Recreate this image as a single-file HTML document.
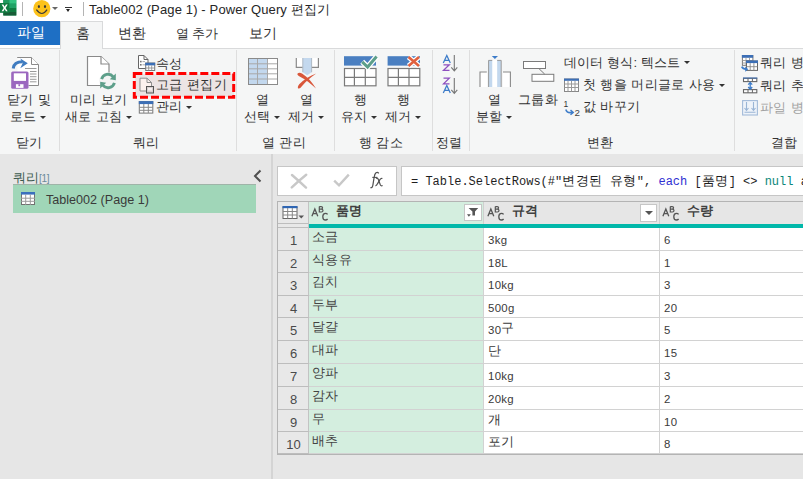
<!DOCTYPE html>
<html><head><meta charset="utf-8">
<style>
*{box-sizing:border-box;margin:0;padding:0}
html,body{width:803px;height:479px;overflow:hidden;background:#fff}
body{position:relative;font-family:"Liberation Sans",sans-serif;color:#333}
.a{position:absolute;white-space:nowrap;line-height:1}
.k13{font-size:13px;letter-spacing:0.4px}
.k14{font-size:13.5px}
.kf{font-size:12.8px;letter-spacing:0.48px}
#ribbon{position:absolute;left:0;top:47.5px;width:803px;height:106.5px;background:#f5f6f6;border-top:1px solid #d9dadb}
.sep{position:absolute;top:1.5px;width:1px;height:101px;background:#dedede}
#lower{position:absolute;left:0;top:154px;width:803px;height:325px;background:#e6e6e6}
.dd{display:inline-block;width:0;height:0;border-left:3px solid transparent;border-right:3px solid transparent;border-top:3px solid #333;vertical-align:middle;margin-left:3.6px;position:relative;top:-0.5px}
</style></head><body>

<!-- title bar -->
<svg class="a" style="left:0;top:0" width="17" height="16" viewBox="0 0 17 16">
  <rect x="3.3" y="0" width="13" height="15.5" fill="#21a366"/>
  <rect x="9.3" y="0" width="7" height="3.6" fill="#33c481"/>
  <rect x="9.3" y="3.6" width="7" height="4.4" fill="#21a366"/>
  <rect x="9.3" y="8" width="7" height="4" fill="#107c41"/>
  <rect x="3.3" y="12" width="13" height="3.5" fill="#185c37"/>
  <rect x="3.3" y="0" width="6" height="3" fill="#1f9a5e"/>
  <rect x="0" y="3" width="9.3" height="9.8" fill="#107c41"/>
  <path d="M1.6 4.6 L3.4 4.6 L4.65 6.7 L5.9 4.6 L7.7 4.6 L5.6 7.9 L7.7 11.2 L5.9 11.2 L4.65 9.1 L3.4 11.2 L1.6 11.2 L3.7 7.9Z" fill="#fff"/>
</svg>
<div class="a" style="left:21.5px;top:2px;width:1px;height:13.5px;background:#b4b4b4"></div>
<svg class="a" style="left:33px;top:0" width="18" height="18" viewBox="0 0 18 18">
  <circle cx="8.8" cy="8.7" r="8.6" fill="#fcc21b"/>
  <ellipse cx="5.9" cy="6.4" rx="1.05" ry="1.5" fill="#3a3a3a"/>
  <ellipse cx="12" cy="6.4" rx="1.05" ry="1.5" fill="#3a3a3a"/>
  <path d="M3.4 9.7 Q8.9 17.3 14.1 9.7" stroke="#3a3a3a" stroke-width="1.2" fill="none"/>
</svg>
<div class="a" style="left:52px;top:7px;width:0;height:0;border-left:3.5px solid transparent;border-right:3.5px solid transparent;border-top:3.5px solid #666"></div>
<div class="a" style="left:65px;top:7px;width:6.5px;height:1px;background:#333"></div>
<div class="a" style="left:65.8px;top:9.2px;width:0;height:0;border-left:2.6px solid transparent;border-right:2.6px solid transparent;border-top:3px solid #222"></div>
<div class="a" style="left:83px;top:2px;width:1px;height:13.5px;background:#b4b4b4"></div>
<div class="a k13" style="left:89px;top:3px;color:#262626;letter-spacing:0.14px">Table002 (Page 1) - Power Query 편집기</div>

<!-- tabs -->
<div class="a" style="left:0;top:21px;width:60px;height:24px;background:#1e6fc4"></div>
<div class="a k14" style="left:16.5px;top:25.5px;color:#fff">파일</div>
<div class="a" style="left:60px;top:21px;width:43px;height:28px;background:#f5f6f6;border:1px solid #d9dadb;border-bottom:none;z-index:2"></div>
<div class="a k14" style="left:75.5px;top:26.5px;z-index:3">홈</div>
<div class="a k14" style="left:118px;top:26.5px">변환</div>
<div class="a k14" style="left:175.5px;top:27px;font-size:13.2px">열 추가</div>
<div class="a k14" style="left:249px;top:26.5px">보기</div>

<div id="ribbon">
  <div class="sep" style="left:59px"></div>
  <div class="sep" style="left:236px"></div>
  <div class="sep" style="left:334px"></div>
  <div class="sep" style="left:432px"></div>
  <div class="sep" style="left:469px"></div>
  <div class="sep" style="left:734px"></div>
</div>



<!-- ribbon icons -->
<!-- close & load -->
<svg class="a" style="left:8px;top:52px" width="36" height="40" viewBox="8 52 36 40">
 <path d="M17.5 57.5H31.5L38.5 64.5V85.5H17.5Z" fill="#fff"/>
 <path d="M17.2 57.5H31.5L38.5 64.5V85.5H28.5" fill="none" stroke="#8a8a8a" stroke-width="1"/>
 <path d="M31.5 57.5V64.5H38.5" fill="#fff" stroke="#8a8a8a" stroke-width="1"/>
 <path d="M25 68.5H36.5M30 71.5H36.5M30 74H36.5M30 76.7H36.5M30 79.3H36.5M30 81.8H36.5" stroke="#9a9a9a" stroke-width="1"/>
 <path d="M13.2 68.5 C13.8 63.5 17 61.8 22.5 61.8" stroke="#3f7cc0" stroke-width="3" fill="none"/>
 <path d="M20.3 58.6 L27.8 63.3 L20.3 68.3 L22.6 63.3Z" fill="#3f7cc0"/>
 <rect x="11.2" y="71.6" width="17.3" height="17.2" rx="1.5" fill="#9b67bf"/>
 <rect x="13.8" y="73.3" width="12.2" height="7.6" fill="#fff"/>
 <rect x="15.9" y="84.2" width="7.6" height="3.7" fill="#fff"/>
 <rect x="18.4" y="84.2" width="1.7" height="2" fill="#9b67bf"/>
</svg>
<!-- refresh preview -->
<svg class="a" style="left:84px;top:52px" width="36" height="40" viewBox="84 52 36 40">
 <path d="M87.5 56.5H101L109 64V85.5H87.5Z" fill="#fff" stroke="#8a8a8a" stroke-width="1.2"/>
 <path d="M101 56.5V64H109" fill="#fff" stroke="#8a8a8a" stroke-width="1.2"/>
 <circle cx="108" cy="81" r="8.8" fill="#f3f4f4"/>
 <path d="M101.6 79.2 A6.6 6.6 0 0 1 113.2 76.8" stroke="#5d9f8a" stroke-width="2.8" fill="none"/>
 <path d="M115.8 73.6 L115.8 80.2 L109.8 79.2Z" fill="#5d9f8a"/>
 <path d="M114.4 82.8 A6.6 6.6 0 0 1 102.8 85.2" stroke="#5d9f8a" stroke-width="2.8" fill="none"/>
 <path d="M100.2 88.4 L100.2 81.8 L106.2 82.8Z" fill="#5d9f8a"/>
</svg>
<!-- properties -->
<svg class="a" style="left:136px;top:54px" width="20" height="18" viewBox="136 54 20 18">
 <path d="M138.5 55.5H144L148 59.5V68.5H138.5Z" fill="#fff" stroke="#666" stroke-width="1"/>
 <path d="M144 55.5V59.5H148" fill="none" stroke="#666" stroke-width="1"/>
 <rect x="140" y="60.8" width="1.6" height="1.6" fill="#777"/><rect x="140" y="64" width="1.6" height="1.6" fill="#777"/>
 <path d="M142.5 61.6H145M142.5 64.8H145" stroke="#aaa" stroke-width="1"/>
 <rect x="145.7" y="63" width="9" height="7.5" fill="#fff" stroke="#777" stroke-width="1"/>
 <rect x="145.2" y="62.8" width="10" height="2.6" fill="#3c6fb6"/>
 <path d="M148.7 65.4V70.5M151.7 65.4V70.5M145.7 68H154.7" stroke="#888" stroke-width="0.8"/>
</svg>
<!-- red dashed highlight -->
<div class="a" style="left:135px;top:74px;width:99px;height:23px;background:#ece4e4"></div>
<svg class="a" style="left:132px;top:71px" width="105" height="29" viewBox="132 71 105 29">
 <rect x="134.3" y="73.4" width="99.4" height="23.9" fill="none" stroke="#ff0000" stroke-width="3" stroke-dasharray="8 3"/>
</svg>
<!-- advanced editor icon -->
<svg class="a" style="left:138px;top:76px" width="18" height="19" viewBox="138 76 18 19">
 <path d="M140 78.2H147L151.5 82.5V91H140Z" fill="#fcf1ee" stroke="#8f8f8f" stroke-width="1"/>
 <path d="M147 78.2V82.5H151.5" fill="none" stroke="#8f8f8f" stroke-width="1"/>
 <rect x="146.5" y="86.5" width="7" height="6.5" fill="#d8d0d0" stroke="#555" stroke-width="1"/>
 <rect x="148" y="88" width="4" height="2.5" fill="#f6f0f0"/>
</svg>
<!-- manage -->
<svg class="a" style="left:137px;top:100px" width="18" height="16" viewBox="137 100 18 16">
 <rect x="139.3" y="101.6" width="13.5" height="11.5" fill="#fff" stroke="#777" stroke-width="1"/>
 <rect x="138.8" y="101.1" width="14.5" height="3" fill="#3c6fb6"/>
 <path d="M143.8 104V113M148.3 104V113M139.3 107.3H152.8M139.3 110.3H152.8" stroke="#888" stroke-width="1"/>
</svg>
<!-- choose columns -->
<svg class="a" style="left:246px;top:56px" width="34" height="31" viewBox="246 56 34 31">
 <rect x="248.5" y="58.5" width="19" height="26" fill="#c3d8ee"/>
 <rect x="267.5" y="58.5" width="10" height="26" fill="#fff"/>
 <path d="M257.5 58.5V84.5M267.5 58.5V84.5M248.5 63.8H277.5M248.5 68.8H277.5M248.5 73.8H277.5M248.5 79H277.5" stroke="#a8a8a8" stroke-width="1"/>
 <rect x="248.5" y="58.5" width="29" height="26" fill="none" stroke="#8a8a8a" stroke-width="1"/>
</svg>
<!-- remove columns -->
<svg class="a" style="left:293px;top:56px" width="28" height="35" viewBox="293 56 28 35">
 <rect x="296.3" y="58" width="22.1" height="9.4" fill="#fff"/>
 <path d="M296.3 58V67.4H302.8M311.6 67.4H318.4V58" fill="none" stroke="#8a8a8a" stroke-width="1.2"/>
 <path d="M302.8 58H311.6V72.2L307.2 75.2L302.8 72.2Z" fill="#c3d8ee"/>
 <path d="M302.8 58V72.2M311.6 58V72.2" stroke="#a9b4bf" stroke-width="0.9"/>
 <path d="M297.6 73.6 C298.4 72.6 300.2 72.4 302 73.5 C307.5 77 312.5 82.5 316 88.6 C311.5 84 305 79 299.2 76.2 C297.6 75.4 297 74.4 297.6 73.6Z" fill="#d9573b"/>
 <path d="M316.2 73.4 C310 75.5 303.5 79.5 299.2 84.2 C297.6 86 297.4 88.4 298.6 88.6 C300 88.8 301 87.2 302.3 85.8 C306 81.2 310.5 77.5 316.2 73.4Z" fill="#d9573b"/>
</svg>
<!-- keep rows -->
<svg class="a" style="left:342px;top:54px" width="38" height="34" viewBox="342 54 38 34">
 <rect x="344" y="56.2" width="32" height="9.4" fill="#4a7fc1"/>
 <rect x="344.5" y="68.5" width="31.5" height="17.3" fill="#fff" stroke="#7a7a7a" stroke-width="1.2"/>
 <path d="M354.4 68.5V85.8M365.3 68.5V85.8M344.5 77.3H376" stroke="#7a7a7a" stroke-width="1.2"/>
 <path d="M362.2 61.8 L367.6 67 L376.6 56.5" stroke="#fff" stroke-width="5.5" fill="none"/>
 <path d="M362.2 61.8 L367.6 67 L376.6 56.5" stroke="#5d9f8a" stroke-width="3" fill="none"/>
</svg>
<!-- remove rows -->
<svg class="a" style="left:385px;top:54px" width="38" height="34" viewBox="385 54 38 34">
 <rect x="387.6" y="56.2" width="32.4" height="9.4" fill="#4a7fc1"/>
 <rect x="388" y="68.5" width="31.8" height="17.3" fill="#fff" stroke="#7a7a7a" stroke-width="1.2"/>
 <path d="M398.4 68.5V85.8M409 68.5V85.8M388 77.3H419.8" stroke="#7a7a7a" stroke-width="1.2"/>
 <path d="M408.5 57 L419 66 M419 57 L408.5 66" stroke="#fff" stroke-width="5" fill="none"/>
 <path d="M408.5 57 L419 66 M419 57 L408.5 66" stroke="#e0603e" stroke-width="2.6" fill="none"/>
</svg>
<!-- sort -->
<svg class="a" style="left:440px;top:53px" width="20" height="42" viewBox="440 53 20 42">
 <path d="M443.3 63 L446.8 55.5 L450.3 63 M444.6 60.3H449" stroke="#3d7cc9" stroke-width="1.25" fill="none"/>
 <path d="M443.5 64.8H449.3L443.5 70.3H449.5" stroke="#8e4fbf" stroke-width="1.25" fill="none"/>
 <path d="M454.3 55V70.5M451.3 67.3L454.3 70.8L457.3 67.3" stroke="#777" stroke-width="1.1" fill="none"/>
 <path d="M443.5 78.2H449.3L443.5 83.8H449.5" stroke="#8e4fbf" stroke-width="1.25" fill="none"/>
 <path d="M443.3 93 L446.8 85.5 L450.3 93 M444.6 90.3H449" stroke="#3d7cc9" stroke-width="1.25" fill="none"/>
 <path d="M454.3 78V93M451.3 89.8L454.3 93.3L457.3 89.8" stroke="#777" stroke-width="1.1" fill="none"/>
</svg>
<!-- split column -->
<svg class="a" style="left:477px;top:54px" width="37" height="35" viewBox="477 54 37 35">
 <rect x="480" y="72" width="7" height="15" fill="#fff"/><rect x="503" y="72" width="7.5" height="15" fill="#fff"/>
 <path d="M480 87V72H486.8M510.4 87V72H503" fill="none" stroke="#8a8a8a" stroke-width="1.1"/>
 <rect x="492.2" y="60" width="5" height="27" fill="#fff"/>
 <rect x="488.4" y="60" width="3.8" height="27" fill="#c3d8ee"/>
 <rect x="497.2" y="60" width="3.9" height="27" fill="#c3d8ee"/>
 <path d="M488.6 87V60.4H492.2M501.2 87V60.4H497.2" fill="none" stroke="#9a9a9a" stroke-width="1"/>
 <path d="M491.8 56H498L494.9 59Z" fill="#3d7cc9"/>
</svg>
<!-- group by -->
<svg class="a" style="left:521px;top:59px" width="35" height="25" viewBox="521 59 35 25">
 <rect x="523.5" y="61.5" width="22" height="7" fill="#fff" stroke="#7a7a7a" stroke-width="1"/>
 <rect x="532" y="74.3" width="21.8" height="7" fill="#fff" stroke="#7a7a7a" stroke-width="1"/>
 <path d="M539 68.7L544.7 74.1" stroke="#7a7a7a" stroke-width="1"/>
</svg>
<!-- first row as headers -->
<svg class="a" style="left:563px;top:78px" width="17" height="15" viewBox="563 78 17 15">
 <rect x="564.5" y="79" width="14" height="12.5" fill="#fff" stroke="#888" stroke-width="1"/>
 <rect x="564" y="78.6" width="15" height="2.2" fill="#3c6fb6"/>
 <path d="M568 80.8V91.5M571.5 80.8V91.5M575 80.8V91.5M564.5 84H578.5M564.5 87.5H578.5" stroke="#999" stroke-width="1"/>
</svg>
<!-- replace values -->
<svg class="a" style="left:562px;top:99px" width="19" height="18" viewBox="562 99 19 18">
 <text x="563.5" y="106.8" font-family="Liberation Sans" font-size="8.5" fill="#333">1</text>
 <path d="M565.8 109.5 C566.5 112.5 568.5 113 572 112.5" stroke="#3d7cc9" stroke-width="1.5" fill="none"/>
 <path d="M570.5 110.2 L573.2 112.4 L570.5 114.8" stroke="#3d7cc9" stroke-width="1.5" fill="none"/>
 <text x="574.5" y="115.6" font-family="Liberation Sans" font-size="9.8" fill="#444">2</text>
</svg>
<!-- merge queries -->
<svg class="a" style="left:740px;top:54px" width="20" height="19" viewBox="740 54 20 19">
 <rect x="742.4" y="55.5" width="10.5" height="9.8" fill="#fff" stroke="#777" stroke-width="1"/>
 <rect x="741.9" y="55" width="11.2" height="2.8" fill="#3c6fb6"/>
 <path d="M746 57.8V65.3M749.5 57.8V65.3M742.4 60.5H752.9M742.4 63H752.9" stroke="#999" stroke-width="0.9"/>
 <rect x="746.5" y="61" width="11" height="9.4" fill="#fff" stroke="#666" stroke-width="1"/>
 <rect x="746" y="60.5" width="12" height="2.6" fill="#3c6fb6"/>
 <path d="M750.2 63.1V70.4M753.9 63.1V70.4M746.5 66.7H757.5" stroke="#888" stroke-width="0.9"/>
 <path d="M741.8 66.6 Q742.8 69 746.2 69.2" stroke="#3d7cc9" stroke-width="1.8" fill="none"/>
 <path d="M745.2 66.6 L748.3 69.2 L745.2 71.8Z" fill="#3d7cc9"/>
</svg>
<!-- append queries -->
<svg class="a" style="left:741px;top:76px" width="18" height="18" viewBox="741 76 18 18">
 <rect x="743.5" y="78.3" width="13.3" height="3.3" fill="#fff" stroke="#666" stroke-width="1.1"/>
 <rect x="743" y="77.5" width="14.3" height="1.1" fill="#3c6fb6"/>
 <path d="M748 78.3V81.6M752.4 78.3V81.6" stroke="#666" stroke-width="1"/>
 <rect x="743.5" y="89.6" width="13.3" height="3.2" fill="#fff" stroke="#666" stroke-width="1.1"/>
 <path d="M748 89.6V92.8M752.4 89.6V92.8" stroke="#666" stroke-width="1"/>
 <path d="M750.2 82.6V89M748.2 84.6L750.2 82.4L752.2 84.6M748.2 87L750.2 89.2L752.2 87" stroke="#3d7cc9" stroke-width="1.3" fill="none"/>
</svg>
<!-- combine files -->
<svg class="a" style="left:741px;top:99px" width="18" height="17" viewBox="741 99 18 17">
 <rect x="742.6" y="100.6" width="14.8" height="14.4" fill="#eef3f9" stroke="#a3bbd9" stroke-width="1.1"/>
 <path d="M746.5 102V110M744.5 108L746.5 110.3L748.5 108M753.5 102V110M751.5 108L753.5 110.3L755.5 108M744.5 112.2H755.5" stroke="#9ab5d5" stroke-width="1.1" fill="none"/>
</svg>

<!-- ribbon texts -->
<div class="a k13" style="left:7px;top:93px">닫기 및</div>
<div class="a k13" style="left:10px;top:110px">로드<span class="dd"></span></div>
<div class="a k13" style="left:16px;top:136px">닫기</div>
<div class="a k13" style="left:70px;top:93px">미리 보기</div>
<div class="a k13" style="left:65px;top:110px">새로 고침<span class="dd"></span></div>
<div class="a k13" style="left:156px;top:57px">속성</div>
<div class="a k13" style="left:156px;top:78px">고급 편집기</div>
<div class="a k13" style="left:156px;top:100px">관리<span class="dd"></span></div>
<div class="a k13" style="left:133px;top:136px">쿼리</div>
<div class="a k13" style="left:256px;top:93px">열</div>
<div class="a k13" style="left:244px;top:110px">선택<span class="dd"></span></div>
<div class="a k13" style="left:300px;top:93px">열</div>
<div class="a k13" style="left:288px;top:110px">제거<span class="dd"></span></div>
<div class="a k13" style="left:262px;top:136px">열 관리</div>
<div class="a k13" style="left:354px;top:93px">행</div>
<div class="a k13" style="left:341px;top:110px">유지<span class="dd"></span></div>
<div class="a k13" style="left:397px;top:93px">행</div>
<div class="a k13" style="left:385px;top:110px">제거<span class="dd"></span></div>
<div class="a k13" style="left:359px;top:136px">행 감소</div>
<div class="a k13" style="left:436px;top:136px">정렬</div>
<div class="a k13" style="left:488px;top:93px">열</div>
<div class="a k13" style="left:476px;top:110px">분할<span class="dd"></span></div>
<div class="a k13" style="left:518px;top:93px">그룹화</div>
<div class="a k13" style="left:564px;top:56.2px;letter-spacing:0.15px">데이터 형식: 텍스트<span class="dd" style="top:-1.5px"></span></div>
<div class="a k13" style="left:583px;top:78px">첫 행을 머리글로 사용<span class="dd"></span></div>
<div class="a k13" style="left:583px;top:100px">값 바꾸기</div>
<div class="a k13" style="left:587px;top:136px">변환</div>
<div class="a k13" style="left:760px;top:56px">쿼리 병합</div>
<div class="a k13" style="left:760px;top:79px">쿼리 추가</div>
<div class="a k13" style="left:760px;top:101px;color:#a0a0a0">파일 병합</div>
<div class="a k13" style="left:771px;top:136px">결합</div>


<div id="lower"></div>
<!-- left pane -->
<div class="a" style="left:13px;top:171px;font-size:13px;color:#3c5a4e">쿼리<span style="font-size:10px;letter-spacing:-0.3px;color:#6a8a9a">[1]</span></div>
<svg class="a" style="left:252px;top:169px" width="11" height="14" viewBox="0 0 11 14"><path d="M8.5 1.5 L3 7 L8.5 12.5" stroke="#505050" stroke-width="2" fill="none"/></svg>
<div class="a" style="left:13px;top:184px;width:243px;height:29px;background:#a0d6b8;border-top:1px solid #9fb4a8"></div>
<svg class="a" style="left:21px;top:192px" width="14" height="13" viewBox="0 0 14 13">
 <rect x="0.5" y="0.5" width="13" height="12" fill="#fff" stroke="#707070"/>
 <rect x="0" y="0" width="14" height="2.6" fill="#3a70bd"/>
 <path d="M0 6.2H14M0 9.3H14M4.7 2.6V13M9.3 2.6V13" stroke="#9a9a9a" stroke-width="1"/>
</svg>
<div class="a" style="left:46px;top:193.5px;font-size:12.6px;color:#3a3a3a">Table002 (Page 1)</div>
<div class="a" style="left:271px;top:154px;width:2px;height:325px;background:#d4d4d4"></div>

<!-- formula bar -->
<div class="a" style="left:277px;top:166px;width:120px;height:30px;background:#fff;border:1px solid #c6c6c6"></div>
<svg class="a" style="left:290px;top:173px" width="18" height="16" viewBox="0 0 18 16"><path d="M2 2 Q9 8 16 14.6 M16.2 1.8 Q8.5 8 1.8 14.4" stroke="#c8c8c8" stroke-width="2.4" fill="none" stroke-linecap="round"/></svg>
<svg class="a" style="left:333px;top:173px" width="17" height="15" viewBox="0 0 17 15"><path d="M1.2 7.6 L6 12.3 L15.8 1.6" stroke="#c8c8c8" stroke-width="2.4" fill="none"/></svg>
<svg class="a" style="left:368px;top:170px" width="17" height="20" viewBox="368 170 17 20">
 <path d="M378.8 173.4 Q377.6 171.9 376 172.8 Q374.7 173.8 374.1 177.5 L372.9 185 Q372.4 188.2 370.4 187.6" stroke="#505050" stroke-width="1.25" fill="none"/>
 <path d="M372.3 177.4 H377.4" stroke="#505050" stroke-width="1.1"/>
 <path d="M376 178.6 Q377.6 177.6 378.4 179.6 L380.3 184.8 Q381 186.4 382.6 185.4" stroke="#505050" stroke-width="1.2" fill="none"/>
 <path d="M382.4 178.6 Q381.2 177.8 379.9 179.6 L377.6 183.6 Q376.6 185.9 375.4 185.6" stroke="#505050" stroke-width="1.2" fill="none"/>
</svg>
<div class="a" style="left:401px;top:166px;width:410px;height:30px;background:#fff;border:1px solid #c6c6c6"></div>
<div class="a" style="left:411px;top:176px;font-family:'Liberation Mono',monospace;font-size:12px;color:#1e1e1e">= Table.SelectRows(#"<span class="kf">변경된</span> <span class="kf">유형</span>", <span style="color:#2f2fd2">each</span> [<span class="kf">품명</span>] &lt;&gt; <span style="color:#09867a">null</span> and</div>

<!-- table -->
<div class="a" style="left:277px;top:201px;width:530px;height:254px;background:#fff;border:1px solid #b4b4b4;border-right:none"></div>
<div class="a" style="left:278px;top:202px;width:31px;height:22px;background:#e8e8e8;border-right:1px solid #c3c3c3;border-bottom:1px solid #bdbdbd"></div>
<div class="a" style="left:278px;top:224px;width:31px;height:4px;background:#e8e8e8;border-right:1px solid #c3c3c3;border-bottom:1px solid #bdbdbd"></div>
<svg class="a" style="left:282px;top:206px" width="23" height="13" viewBox="0 0 23 13">
 <rect x="1" y="1" width="14" height="11.5" fill="#fff" stroke="#666" stroke-width="1"/>
 <rect x="0.5" y="0" width="15" height="2.2" fill="#2f66b3"/>
 <path d="M1 5.5H15M1 9H15M5.7 2V12.5M10.3 2V12.5" stroke="#888" stroke-width="1"/>
 <path d="M16.5 9.5H22L19.25 12.5Z" fill="#555"/>
</svg>
<div class="a" style="left:309px;top:202px;width:175px;height:22px;background:#d4eedf;border-right:1px solid #cfcfcf"></div>
<div class="a" style="left:484px;top:202px;width:176px;height:22px;background:#e6e6e6;border-right:1px solid #cfcfcf"></div>
<div class="a" style="left:660px;top:202px;width:150px;height:22px;background:#e6e6e6"></div>
<div class="a" style="left:309px;top:224px;width:500px;height:4px;background:#01b8aa"></div>
<svg class="a" style="left:311px;top:206px" width="18" height="15" viewBox="0 0 18 15"><path d="M0.9 10.2 L3.85 3 L6.8 10.2 M2.1 7.7 H5.6" stroke="#555" stroke-width="1.3" fill="none"/><path d="M8.3 0.6 V6 H10.4 Q12 6 12 4.5 Q12 3.1 10.2 3.1 H8.3 M8.3 0.6 H10.1 Q11.6 0.6 11.6 1.85 Q11.6 3.1 10.1 3.1" stroke="#555" stroke-width="1.2" fill="none"/><path d="M16.6 8.3 Q15.8 7.3 14.5 7.3 Q11.8 7.3 11.8 10.65 Q11.8 14 14.5 14 Q15.8 14 16.6 13" stroke="#555" stroke-width="1.3" fill="none"/></svg>
<div class="a" style="left:336px;top:204px;font-size:13px;letter-spacing:0.3px;font-weight:bold;color:#404040">품명</div>
<svg class="a" style="left:487px;top:206px" width="18" height="15" viewBox="0 0 18 15"><path d="M0.9 10.2 L3.85 3 L6.8 10.2 M2.1 7.7 H5.6" stroke="#555" stroke-width="1.3" fill="none"/><path d="M8.3 0.6 V6 H10.4 Q12 6 12 4.5 Q12 3.1 10.2 3.1 H8.3 M8.3 0.6 H10.1 Q11.6 0.6 11.6 1.85 Q11.6 3.1 10.1 3.1" stroke="#555" stroke-width="1.2" fill="none"/><path d="M16.6 8.3 Q15.8 7.3 14.5 7.3 Q11.8 7.3 11.8 10.65 Q11.8 14 14.5 14 Q15.8 14 16.6 13" stroke="#555" stroke-width="1.3" fill="none"/></svg>
<div class="a" style="left:512px;top:204px;font-size:13px;letter-spacing:0.3px;font-weight:bold;color:#404040">규격</div>
<svg class="a" style="left:662px;top:206px" width="18" height="15" viewBox="0 0 18 15"><path d="M0.9 10.2 L3.85 3 L6.8 10.2 M2.1 7.7 H5.6" stroke="#555" stroke-width="1.3" fill="none"/><path d="M8.3 0.6 V6 H10.4 Q12 6 12 4.5 Q12 3.1 10.2 3.1 H8.3 M8.3 0.6 H10.1 Q11.6 0.6 11.6 1.85 Q11.6 3.1 10.1 3.1" stroke="#555" stroke-width="1.2" fill="none"/><path d="M16.6 8.3 Q15.8 7.3 14.5 7.3 Q11.8 7.3 11.8 10.65 Q11.8 14 14.5 14 Q15.8 14 16.6 13" stroke="#555" stroke-width="1.3" fill="none"/></svg>
<div class="a" style="left:687px;top:204px;font-size:13px;letter-spacing:0.3px;font-weight:bold;color:#404040">수량</div>
<div class="a" style="left:464px;top:204px;width:18px;height:17px;background:#fff;border:1px solid #c6c6c6"></div>
<svg class="a" style="left:466px;top:207px" width="14" height="10" viewBox="466 207 14 10"><path d="M468.6 208H478.2L475 211.6V215.5H472.4V211.6Z" fill="#555"/><path d="M467 214.3H470.8L468.9 216.7Z" fill="#555"/></svg>
<div class="a" style="left:640px;top:204px;width:17px;height:18px;background:#fff;border:1px solid #c6c6c6"></div>
<div class="a" style="left:645px;top:211px;width:0;height:0;border-left:4px solid transparent;border-right:4px solid transparent;border-top:4px solid #555"></div>
<div class="a" style="left:278px;top:228.0px;width:31px;height:23px;background:#e8e8e8;border-right:1px solid #c3c3c3;border-bottom:1px solid #bdbdbd"></div>
<div class="a" style="left:309px;top:228.0px;width:175px;height:23px;background:#d4eedf;border-right:1px solid #d2d2d2;border-bottom:1px solid #d2d2d2"></div>
<div class="a" style="left:484px;top:228.0px;width:176px;height:23px;background:#fff;border-right:1px solid #d2d2d2;border-bottom:1px solid #d2d2d2"></div>
<div class="a" style="left:660px;top:228.0px;width:150px;height:23px;background:#fff;border-bottom:1px solid #d2d2d2"></div>
<div class="a" style="left:278px;width:31px;text-align:center;top:234.0px;font-size:13px;color:#4a4a4a">1</div>
<div class="a" style="left:312px;top:230.3px;font-size:13px;letter-spacing:0.4px;color:#444">소금</div>
<div class="a" style="left:488px;top:234.5px;font-size:11.4px;letter-spacing:0.3px;color:#3a3a3a">3kg</div>
<div class="a" style="left:664px;top:234.5px;font-size:11.4px;letter-spacing:0.3px;color:#3a3a3a">6</div>
<div class="a" style="left:278px;top:251.0px;width:31px;height:22px;background:#e8e8e8;border-right:1px solid #c3c3c3;border-bottom:1px solid #bdbdbd"></div>
<div class="a" style="left:309px;top:251.0px;width:175px;height:22px;background:#d4eedf;border-right:1px solid #d2d2d2;border-bottom:1px solid #d2d2d2"></div>
<div class="a" style="left:484px;top:251.0px;width:176px;height:22px;background:#fff;border-right:1px solid #d2d2d2;border-bottom:1px solid #d2d2d2"></div>
<div class="a" style="left:660px;top:251.0px;width:150px;height:22px;background:#fff;border-bottom:1px solid #d2d2d2"></div>
<div class="a" style="left:278px;width:31px;text-align:center;top:257.0px;font-size:13px;color:#4a4a4a">2</div>
<div class="a" style="left:312px;top:253.3px;font-size:13px;letter-spacing:0.4px;color:#444">식용유</div>
<div class="a" style="left:488px;top:257.5px;font-size:11.4px;letter-spacing:0.3px;color:#3a3a3a">18L</div>
<div class="a" style="left:664px;top:257.5px;font-size:11.4px;letter-spacing:0.3px;color:#3a3a3a">1</div>
<div class="a" style="left:278px;top:273.0px;width:31px;height:23px;background:#e8e8e8;border-right:1px solid #c3c3c3;border-bottom:1px solid #bdbdbd"></div>
<div class="a" style="left:309px;top:273.0px;width:175px;height:23px;background:#d4eedf;border-right:1px solid #d2d2d2;border-bottom:1px solid #d2d2d2"></div>
<div class="a" style="left:484px;top:273.0px;width:176px;height:23px;background:#fff;border-right:1px solid #d2d2d2;border-bottom:1px solid #d2d2d2"></div>
<div class="a" style="left:660px;top:273.0px;width:150px;height:23px;background:#fff;border-bottom:1px solid #d2d2d2"></div>
<div class="a" style="left:278px;width:31px;text-align:center;top:279.0px;font-size:13px;color:#4a4a4a">3</div>
<div class="a" style="left:312px;top:275.3px;font-size:13px;letter-spacing:0.4px;color:#444">김치</div>
<div class="a" style="left:488px;top:279.5px;font-size:11.4px;letter-spacing:0.3px;color:#3a3a3a">10kg</div>
<div class="a" style="left:664px;top:279.5px;font-size:11.4px;letter-spacing:0.3px;color:#3a3a3a">3</div>
<div class="a" style="left:278px;top:296.0px;width:31px;height:22px;background:#e8e8e8;border-right:1px solid #c3c3c3;border-bottom:1px solid #bdbdbd"></div>
<div class="a" style="left:309px;top:296.0px;width:175px;height:22px;background:#d4eedf;border-right:1px solid #d2d2d2;border-bottom:1px solid #d2d2d2"></div>
<div class="a" style="left:484px;top:296.0px;width:176px;height:22px;background:#fff;border-right:1px solid #d2d2d2;border-bottom:1px solid #d2d2d2"></div>
<div class="a" style="left:660px;top:296.0px;width:150px;height:22px;background:#fff;border-bottom:1px solid #d2d2d2"></div>
<div class="a" style="left:278px;width:31px;text-align:center;top:302.0px;font-size:13px;color:#4a4a4a">4</div>
<div class="a" style="left:312px;top:298.3px;font-size:13px;letter-spacing:0.4px;color:#444">두부</div>
<div class="a" style="left:488px;top:302.5px;font-size:11.4px;letter-spacing:0.3px;color:#3a3a3a">500g</div>
<div class="a" style="left:664px;top:302.5px;font-size:11.4px;letter-spacing:0.3px;color:#3a3a3a">20</div>
<div class="a" style="left:278px;top:318.0px;width:31px;height:23px;background:#e8e8e8;border-right:1px solid #c3c3c3;border-bottom:1px solid #bdbdbd"></div>
<div class="a" style="left:309px;top:318.0px;width:175px;height:23px;background:#d4eedf;border-right:1px solid #d2d2d2;border-bottom:1px solid #d2d2d2"></div>
<div class="a" style="left:484px;top:318.0px;width:176px;height:23px;background:#fff;border-right:1px solid #d2d2d2;border-bottom:1px solid #d2d2d2"></div>
<div class="a" style="left:660px;top:318.0px;width:150px;height:23px;background:#fff;border-bottom:1px solid #d2d2d2"></div>
<div class="a" style="left:278px;width:31px;text-align:center;top:324.0px;font-size:13px;color:#4a4a4a">5</div>
<div class="a" style="left:312px;top:320.3px;font-size:13px;letter-spacing:0.4px;color:#444">달걀</div>
<div class="a" style="left:488px;top:324.5px;font-size:11.4px;letter-spacing:0.3px;color:#3a3a3a">30<span style="font-size:13px;line-height:0;letter-spacing:0.4px;position:relative;top:-1.2px">구</span></div>
<div class="a" style="left:664px;top:324.5px;font-size:11.4px;letter-spacing:0.3px;color:#3a3a3a">5</div>
<div class="a" style="left:278px;top:341.0px;width:31px;height:23px;background:#e8e8e8;border-right:1px solid #c3c3c3;border-bottom:1px solid #bdbdbd"></div>
<div class="a" style="left:309px;top:341.0px;width:175px;height:23px;background:#d4eedf;border-right:1px solid #d2d2d2;border-bottom:1px solid #d2d2d2"></div>
<div class="a" style="left:484px;top:341.0px;width:176px;height:23px;background:#fff;border-right:1px solid #d2d2d2;border-bottom:1px solid #d2d2d2"></div>
<div class="a" style="left:660px;top:341.0px;width:150px;height:23px;background:#fff;border-bottom:1px solid #d2d2d2"></div>
<div class="a" style="left:278px;width:31px;text-align:center;top:347.0px;font-size:13px;color:#4a4a4a">6</div>
<div class="a" style="left:312px;top:343.3px;font-size:13px;letter-spacing:0.4px;color:#444">대파</div>
<div class="a" style="left:488px;top:347.5px;font-size:11.4px;letter-spacing:0.3px;color:#3a3a3a"><span style="font-size:13px;line-height:0;letter-spacing:0.4px;position:relative;top:-1.2px">단</span></div>
<div class="a" style="left:664px;top:347.5px;font-size:11.4px;letter-spacing:0.3px;color:#3a3a3a">15</div>
<div class="a" style="left:278px;top:364.0px;width:31px;height:23px;background:#e8e8e8;border-right:1px solid #c3c3c3;border-bottom:1px solid #bdbdbd"></div>
<div class="a" style="left:309px;top:364.0px;width:175px;height:23px;background:#d4eedf;border-right:1px solid #d2d2d2;border-bottom:1px solid #d2d2d2"></div>
<div class="a" style="left:484px;top:364.0px;width:176px;height:23px;background:#fff;border-right:1px solid #d2d2d2;border-bottom:1px solid #d2d2d2"></div>
<div class="a" style="left:660px;top:364.0px;width:150px;height:23px;background:#fff;border-bottom:1px solid #d2d2d2"></div>
<div class="a" style="left:278px;width:31px;text-align:center;top:370.0px;font-size:13px;color:#4a4a4a">7</div>
<div class="a" style="left:312px;top:366.3px;font-size:13px;letter-spacing:0.4px;color:#444">양파</div>
<div class="a" style="left:488px;top:370.5px;font-size:11.4px;letter-spacing:0.3px;color:#3a3a3a">10kg</div>
<div class="a" style="left:664px;top:370.5px;font-size:11.4px;letter-spacing:0.3px;color:#3a3a3a">3</div>
<div class="a" style="left:278px;top:387.0px;width:31px;height:23px;background:#e8e8e8;border-right:1px solid #c3c3c3;border-bottom:1px solid #bdbdbd"></div>
<div class="a" style="left:309px;top:387.0px;width:175px;height:23px;background:#d4eedf;border-right:1px solid #d2d2d2;border-bottom:1px solid #d2d2d2"></div>
<div class="a" style="left:484px;top:387.0px;width:176px;height:23px;background:#fff;border-right:1px solid #d2d2d2;border-bottom:1px solid #d2d2d2"></div>
<div class="a" style="left:660px;top:387.0px;width:150px;height:23px;background:#fff;border-bottom:1px solid #d2d2d2"></div>
<div class="a" style="left:278px;width:31px;text-align:center;top:393.0px;font-size:13px;color:#4a4a4a">8</div>
<div class="a" style="left:312px;top:389.3px;font-size:13px;letter-spacing:0.4px;color:#444">감자</div>
<div class="a" style="left:488px;top:393.5px;font-size:11.4px;letter-spacing:0.3px;color:#3a3a3a">20kg</div>
<div class="a" style="left:664px;top:393.5px;font-size:11.4px;letter-spacing:0.3px;color:#3a3a3a">2</div>
<div class="a" style="left:278px;top:410.0px;width:31px;height:22px;background:#e8e8e8;border-right:1px solid #c3c3c3;border-bottom:1px solid #bdbdbd"></div>
<div class="a" style="left:309px;top:410.0px;width:175px;height:22px;background:#d4eedf;border-right:1px solid #d2d2d2;border-bottom:1px solid #d2d2d2"></div>
<div class="a" style="left:484px;top:410.0px;width:176px;height:22px;background:#fff;border-right:1px solid #d2d2d2;border-bottom:1px solid #d2d2d2"></div>
<div class="a" style="left:660px;top:410.0px;width:150px;height:22px;background:#fff;border-bottom:1px solid #d2d2d2"></div>
<div class="a" style="left:278px;width:31px;text-align:center;top:416.0px;font-size:13px;color:#4a4a4a">9</div>
<div class="a" style="left:312px;top:412.3px;font-size:13px;letter-spacing:0.4px;color:#444">무</div>
<div class="a" style="left:488px;top:416.5px;font-size:11.4px;letter-spacing:0.3px;color:#3a3a3a"><span style="font-size:13px;line-height:0;letter-spacing:0.4px;position:relative;top:-1.2px">개</span></div>
<div class="a" style="left:664px;top:416.5px;font-size:11.4px;letter-spacing:0.3px;color:#3a3a3a">10</div>
<div class="a" style="left:278px;top:432.0px;width:31px;height:22px;background:#e8e8e8;border-right:1px solid #c3c3c3;border-bottom:1px solid #bdbdbd"></div>
<div class="a" style="left:309px;top:432.0px;width:175px;height:22px;background:#d4eedf;border-right:1px solid #d2d2d2;border-bottom:1px solid #d2d2d2"></div>
<div class="a" style="left:484px;top:432.0px;width:176px;height:22px;background:#fff;border-right:1px solid #d2d2d2;border-bottom:1px solid #d2d2d2"></div>
<div class="a" style="left:660px;top:432.0px;width:150px;height:22px;background:#fff;border-bottom:1px solid #d2d2d2"></div>
<div class="a" style="left:278px;width:31px;text-align:center;top:438.0px;font-size:13px;color:#4a4a4a">10</div>
<div class="a" style="left:312px;top:434.3px;font-size:13px;letter-spacing:0.4px;color:#444">배추</div>
<div class="a" style="left:488px;top:438.5px;font-size:11.4px;letter-spacing:0.3px;color:#3a3a3a"><span style="font-size:13px;line-height:0;letter-spacing:0.4px;position:relative;top:-1.2px">포기</span></div>
<div class="a" style="left:664px;top:438.5px;font-size:11.4px;letter-spacing:0.3px;color:#3a3a3a">8</div>
</body></html>
